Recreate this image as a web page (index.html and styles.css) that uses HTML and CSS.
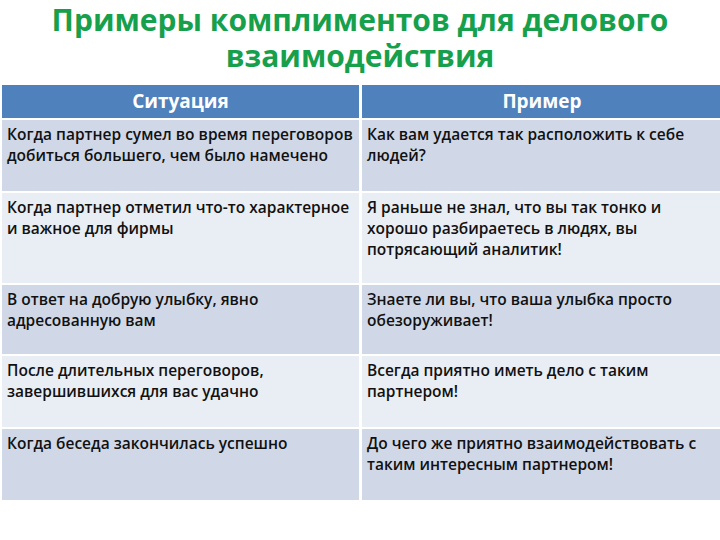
FILE: index.html
```html
<!DOCTYPE html>
<html lang="ru">
<head>
<meta charset="utf-8">
<link rel="stylesheet" href="styles.css">
</head>
<body>
<h1 class="title">Примеры комплиментов для делового<br>взаимодействия</h1>
<div class="table">
  <div class="cell head">Ситуация</div>
  <div class="cell head">Пример</div>
  <div class="cell odd">Когда партнер сумел во время переговоров добиться большего, чем было намечено</div>
  <div class="cell odd">Как вам удается так расположить к себе людей?</div>
  <div class="cell even">Когда партнер отметил что-то характерное и важное для фирмы</div>
  <div class="cell even">Я раньше не знал, что вы так тонко и хорошо разбираетесь в людях, вы потрясающий аналитик!</div>
  <div class="cell odd">В ответ на добрую улыбку, явно адресованную вам</div>
  <div class="cell odd">Знаете ли вы, что ваша улыбка просто обезоруживает!</div>
  <div class="cell even">После длительных переговоров, завершившихся для вас удачно</div>
  <div class="cell even">Всегда приятно иметь дело с таким партнером!</div>
  <div class="cell odd">Когда беседа закончилась успешно</div>
  <div class="cell odd">До чего же приятно взаимодействовать с таким интересным партнером!</div>
</div>
</body>
</html>
```
FILE: styles.css
```css
html, body {
  margin: 0;
  padding: 0;
  background: #ffffff;
  overflow: hidden;
}
body {
  width: 720px;
  height: 540px;
  font-family: "Open Sans", "Noto Sans", sans-serif;
}
.title {
  margin: 0;
  height: 85px;
  box-sizing: border-box;
  padding-top: 2px;
  text-align: center;
  color: #17a04c;
  font-size: 30px;
  line-height: 36px;
  font-weight: 700;
  white-space: nowrap;
}
.table {
  display: grid;
  grid-template-columns: 357px 360px;
  grid-template-rows: 33px 71px 90px 69px 71px 71px;
  column-gap: 3px;
  row-gap: 2px;
  margin-left: 2px;
}
.cell {
  box-sizing: border-box;
  padding: 4px 0 0 5px;
  font-size: 15.5px;
  letter-spacing: 0;
  line-height: 21px;
  font-weight: 600;
  color: #111;
}
.head {
  background: #4f81bd;
  color: #ffffff;
  text-align: center;
  font-weight: 700;
  font-size: 19px;
  line-height: 33px;
  padding: 0;
}
.odd {
  background: #d0d8e8;
}
.even {
  background: #e9edf4;
}
```
